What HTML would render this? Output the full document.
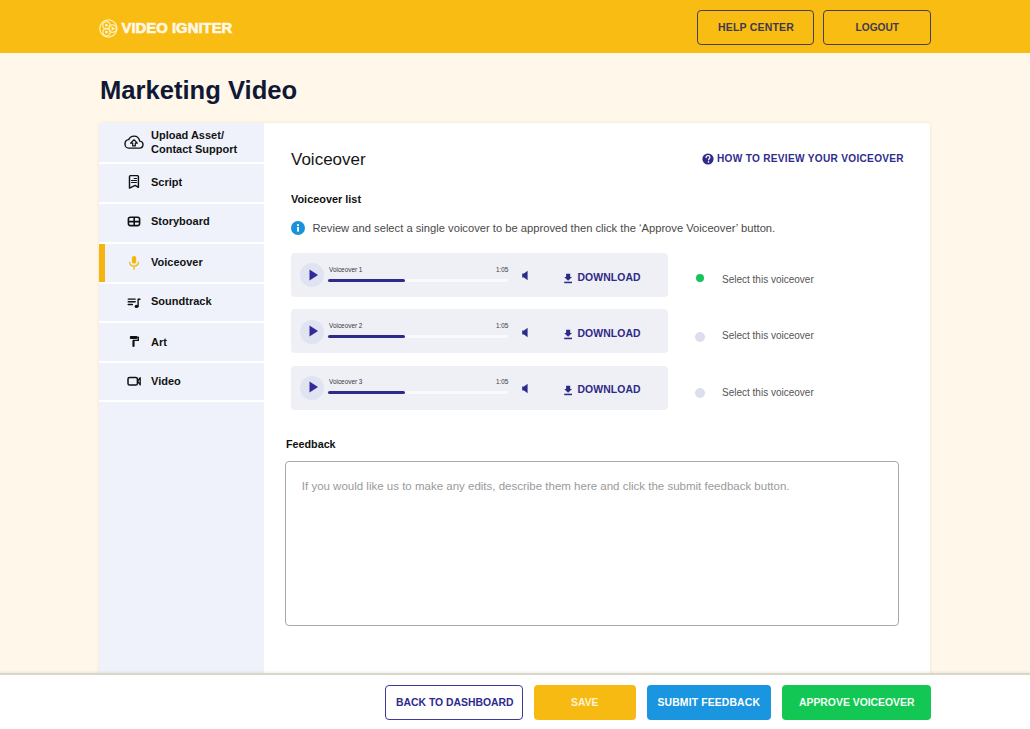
<!DOCTYPE html>
<html><head><meta charset="utf-8">
<style>
*{box-sizing:border-box;margin:0;padding:0}
html,body{width:1030px;height:729px;overflow:hidden}
body{font-family:"Liberation Sans",sans-serif;background:#FEF7EA;position:relative;color:#0F1535}
.a{position:absolute;white-space:nowrap;line-height:1}
#hdr{left:0;top:0;width:1030px;height:53px;background:#F8BC13}
.hbtn{position:absolute;top:10px;height:34.5px;border:1.6px solid #45404A;border-radius:4px}
.htx{position:absolute;font-weight:bold;font-size:10.5px;color:#3F3A4C;letter-spacing:0.2px;line-height:1;white-space:nowrap}
#title{left:100px;top:77.5px;font-size:25.6px;font-weight:bold;color:#111833}
#card{left:99px;top:123px;width:831px;height:552px;background:#fff;border-radius:3px 3px 0 0;box-shadow:0 0 3px rgba(180,170,140,0.25)}
#side{left:99px;top:123px;width:165px;height:552px;background:#EFF2FA;border-radius:3px 0 0 0}
.sep{position:absolute;left:99px;width:165px;height:2px;background:#fff}
.stx{position:absolute;left:151px;font-weight:bold;font-size:11px;color:#121212;line-height:1;white-space:nowrap}
.sic{position:absolute}
.row{position:absolute;left:291px;width:377px;height:44px;background:#EFEFF6;border-radius:4px}
.play{position:absolute;left:300px;width:24px;height:24px;border-radius:50%;background:#E0E3F2}
.vl{position:absolute;left:329px;font-size:6.4px;color:#38383F;line-height:1}
.vt{position:absolute;left:496px;font-size:6.3px;color:#38383F;line-height:1}
.trk{position:absolute;left:328px;width:180px;height:3px;background:#FAFAFD;border-radius:2px}
.prg{position:absolute;left:0;top:0;width:77px;height:3px;background:#2E2A8C;border-radius:2px}
.dl{position:absolute;left:577.5px;font-size:10.4px;font-weight:bold;color:#2D2A85;line-height:1;letter-spacing:0.1px}
.rad{position:absolute;left:695px;width:10px;height:10px;border-radius:50%;background:#DCDEEE}
.sel{position:absolute;left:722px;font-size:10px;color:#555558;line-height:1}
#foot{left:0;top:673px;width:1030px;height:56px;background:#fff;border-top:2px solid #D8D7CA;box-shadow:0 -1px 2px rgba(120,120,90,0.12)}
.fbtn{position:absolute;top:685px;height:34.5px;border-radius:4px}
.ftx{position:absolute;top:697.5px;font-weight:bold;font-size:10.4px;line-height:1;color:#fff;white-space:nowrap}
</style></head><body>
<div id="hdr" class="a"></div>
<svg class="a" style="left:98px;top:18px" width="22" height="22" viewBox="0 0 22 22">
 <g fill="none" stroke="#FFF1B8" stroke-width="1.25">
  <circle cx="10.4" cy="10.4" r="8.6"/>
  <circle cx="8.4" cy="7.2" r="3.7"/>
  <circle cx="14.6" cy="10.6" r="3.7"/>
  <circle cx="8.6" cy="14.1" r="3.7"/>
 </g>
 <g fill="#FFF8E0">
  <path d="M7.4 5.6 L10.5 7.25 L7.4 8.9 Z"/>
  <path d="M13.6 8.4 L17.1 10.55 L13.6 12.7 Z"/>
  <path d="M7.5 12.3 L10.7 14.05 L7.5 15.8 Z"/>
 </g>
</svg>
<div class="a" style="left:121.5px;top:21.2px;font-size:14.9px;font-weight:bold;color:#FFF8E6;-webkit-text-stroke:0.6px #FFF8E6">VIDEO IGNITER</div>
<div class="hbtn" style="left:697px;width:117px"></div>
<div class="htx" style="left:718px;top:22.3px">HELP CENTER</div>
<div class="hbtn" style="left:823px;width:108px"></div>
<div class="htx" style="left:855.5px;top:22.9px;letter-spacing:0;font-size:10.2px">LOGOUT</div>
<div id="title" class="a">Marketing Video</div>
<div id="card" class="a"></div>
<div id="side" class="a"></div>
<div class="sep" style="top:162px"></div>
<div class="sep" style="top:202px"></div>
<div class="sep" style="top:242px"></div>
<div class="sep" style="top:282px"></div>
<div class="sep" style="top:321px"></div>
<div class="sep" style="top:361px"></div>
<div class="sep" style="top:400px"></div>
<div class="a" style="left:99px;top:243.5px;width:6px;height:38px;background:#F5B50E"></div>
<svg class="a" style="left:120px;top:130px" width="28" height="24" viewBox="0 0 28 24" fill="none" stroke="#111" stroke-width="1.4" stroke-linejoin="round">
 <path d="M8.6 18.1 H19.4 C21.6 18.1 23 16.5 23 14.6 C23 12.7 21.6 11.3 19.7 11.1 C19.1 7.9 16.8 6.1 14 6.1 C11.4 6.1 9.6 7.6 8.7 9.6 C6.4 9.8 5 11.7 5 13.9 C5 16.2 6.6 18.1 8.6 18.1 Z"/>
 <path d="M14 9.8 L10.6 13.1 H12.7 V15.9 H15.3 V13.1 H17.4 Z" stroke-width="1.2"/>
</svg>
<svg class="a" style="left:122px;top:170px" width="24" height="24" viewBox="0 0 24 24" fill="none" stroke="#111" stroke-width="1.45" stroke-linejoin="round" stroke-linecap="round">
 <path d="M7.5 18.1 V6.5 Q7.5 5.6 8.4 5.6 H15.5 Q16.4 5.6 16.4 6.5 V17.3 L13.2 15.4 Z"/>
 <path d="M12.2 8.5 H14.5 M9.5 10.5 H14.5 M9.5 12.5 H14.5" stroke-width="1.1"/>
</svg>
<svg class="a" style="left:122px;top:209px" width="24" height="24" viewBox="0 0 24 24" fill="none" stroke="#111" stroke-width="1.6">
 <rect x="6.4" y="8.2" width="11.2" height="8.4" rx="2"/>
 <path d="M12.2 8.2 V16.6 M6.4 12.6 H17.6"/>
</svg>
<svg class="a" style="left:122px;top:250px" width="24" height="24" viewBox="0 0 24 24">
 <rect x="9.9" y="5.9" width="4.3" height="7.8" rx="2.15" fill="#F2B705"/>
 <path d="M7.6 12.4 Q8.3 16.2 12 16.2 Q15.7 16.2 16.5 12.4 M12 16.2 V19" fill="none" stroke="#F2B705" stroke-width="1.3" stroke-linecap="round"/>
</svg>
<svg class="a" style="left:122px;top:291px" width="24" height="24" viewBox="0 0 24 24">
 <path d="M6.2 8.1 H13.2 M6.2 10.7 H13.2 M6.2 13.5 H10.4" fill="none" stroke="#111" stroke-width="1.4" stroke-linecap="round"/>
 <path d="M16.1 15.3 V8.2 H18" fill="none" stroke="#111" stroke-width="1.4" stroke-linecap="round" stroke-linejoin="round"/>
 <ellipse cx="14.5" cy="15.4" rx="1.9" ry="1.7" fill="#111"/>
</svg>
<svg class="a" style="left:122px;top:329px" width="24" height="24" viewBox="0 0 24 24">
 <rect x="7.9" y="6.9" width="7.4" height="3.1" rx="0.8" fill="#111"/>
 <path d="M15.2 8.3 H16.3 V11.4 H11.5" fill="none" stroke="#111" stroke-width="1.4" stroke-linejoin="round"/>
 <path d="M11.5 11.8 V17" fill="none" stroke="#111" stroke-width="2.2" stroke-linecap="round"/>
</svg>
<svg class="a" style="left:122px;top:369px" width="24" height="24" viewBox="0 0 24 24" fill="none" stroke="#111" stroke-width="1.5" stroke-linejoin="round">
 <rect x="6" y="8.4" width="9.4" height="7.7" rx="1.6"/>
 <path d="M15.6 12.2 L18.2 8.7 V15.9 Z" stroke-width="1.3"/>
</svg>
<div class="stx" style="top:130.2px">Upload Asset/</div>
<div class="stx" style="top:143.6px">Contact Support</div>
<div class="stx" style="top:176.9px">Script</div>
<div class="stx" style="top:216.3px">Storyboard</div>
<div class="stx" style="top:256.9px">Voiceover</div>
<div class="stx" style="top:296.2px">Soundtrack</div>
<div class="stx" style="top:336.9px">Art</div>
<div class="stx" style="top:375.9px">Video</div>

<!-- main -->
<div class="a" style="left:291px;top:151.2px;font-size:17px;color:#161616">Voiceover</div>
<svg class="a" style="left:702px;top:153px" width="12" height="12" viewBox="0 0 12 12"><circle cx="6" cy="6" r="5.6" fill="#2E2A8C"/><path d="M4.1 4.6 C4.1 3.4 5 2.7 6 2.7 C7.1 2.7 7.9 3.4 7.9 4.4 C7.9 5.5 6.6 5.7 6.6 6.8" fill="none" stroke="#fff" stroke-width="1.3" stroke-linecap="round"/><circle cx="6.5" cy="8.9" r="0.8" fill="#fff"/></svg>
<div class="a" style="left:717px;top:154.2px;font-size:10.1px;font-weight:bold;color:#302C8E;letter-spacing:0.3px">HOW TO REVIEW YOUR VOICEOVER</div>
<div class="a" style="left:291px;top:194px;font-size:10.9px;font-weight:bold;color:#111">Voiceover list</div>
<svg class="a" style="left:290.8px;top:220.8px" width="14" height="14" viewBox="0 0 14 14"><circle cx="7" cy="7" r="7" fill="#1A92D9"/><rect x="6.1" y="6" width="1.9" height="4.6" fill="#fff"/><circle cx="7" cy="4.2" r="1.1" fill="#fff"/></svg>
<div class="a" style="left:312.5px;top:222.7px;font-size:11.2px;color:#4A4A4A">Review and select a single voicover to be approved then click the ‘Approve Voiceover’ button.</div>

<!-- rows -->
<div class="row" style="top:253px"></div>
<div class="row" style="top:309px"></div>
<div class="row" style="top:365.5px"></div>

<div class="play" style="top:263px"></div>
<div class="play" style="top:319.5px"></div>
<div class="play" style="top:375.5px"></div>
<svg class="a" style="left:309px;top:268.9px" width="10" height="12"><path d="M0.5 0.5 L9 6 L0.5 11.5 Z" fill="#33299A"/></svg>
<svg class="a" style="left:309px;top:325.4px" width="10" height="12"><path d="M0.5 0.5 L9 6 L0.5 11.5 Z" fill="#33299A"/></svg>
<svg class="a" style="left:309px;top:381.4px" width="10" height="12"><path d="M0.5 0.5 L9 6 L0.5 11.5 Z" fill="#33299A"/></svg>

<div class="vl" style="top:266.8px">Voiceover 1</div>
<div class="vl" style="top:323.2px">Voiceover 2</div>
<div class="vl" style="top:379.4px">Voiceover 3</div>
<div class="vt" style="top:266.8px">1:05</div>
<div class="vt" style="top:323.2px">1:05</div>
<div class="vt" style="top:379.4px">1:05</div>
<div class="trk" style="top:278.8px"><div class="prg"></div></div>
<div class="trk" style="top:335.2px"><div class="prg"></div></div>
<div class="trk" style="top:391.4px"><div class="prg"></div></div>

<svg class="a" style="left:521px;top:270px" width="8" height="11"><path d="M1.2 3.6 H3 L6.6 0.8 V10.2 L3 7.4 H1.2 Z" fill="#2E2A8C"/></svg>
<svg class="a" style="left:521px;top:326.5px" width="8" height="11"><path d="M1.2 3.6 H3 L6.6 0.8 V10.2 L3 7.4 H1.2 Z" fill="#2E2A8C"/></svg>
<svg class="a" style="left:521px;top:382.5px" width="8" height="11"><path d="M1.2 3.6 H3 L6.6 0.8 V10.2 L3 7.4 H1.2 Z" fill="#2E2A8C"/></svg>

<svg class="a" style="left:563px;top:272.5px" width="10" height="11"><path d="M3.1 0.8 H7.2 V3.9 H9 L5.1 7.8 L1.2 3.9 H3.1 Z" fill="#2D2A85"/><rect x="1.2" y="8.7" width="7.8" height="1.5" fill="#2D2A85"/></svg>
<svg class="a" style="left:563px;top:329px" width="10" height="11"><path d="M3.1 0.8 H7.2 V3.9 H9 L5.1 7.8 L1.2 3.9 H3.1 Z" fill="#2D2A85"/><rect x="1.2" y="8.7" width="7.8" height="1.5" fill="#2D2A85"/></svg>
<svg class="a" style="left:563px;top:385px" width="10" height="11"><path d="M3.1 0.8 H7.2 V3.9 H9 L5.1 7.8 L1.2 3.9 H3.1 Z" fill="#2D2A85"/><rect x="1.2" y="8.7" width="7.8" height="1.5" fill="#2D2A85"/></svg>
<div class="dl" style="top:272.6px">DOWNLOAD</div>
<div class="dl" style="top:329px">DOWNLOAD</div>
<div class="dl" style="top:385.2px">DOWNLOAD</div>

<div class="rad" style="top:273.8px;background:#17C45A;width:8.5px;height:8.5px;left:695.6px"></div>
<div class="rad" style="top:331.5px"></div>
<div class="rad" style="top:387.5px"></div>
<div class="sel" style="top:274.8px">Select this voiceover</div>
<div class="sel" style="top:331.2px">Select this voiceover</div>
<div class="sel" style="top:387.5px">Select this voiceover</div>

<div class="a" style="left:286px;top:438.8px;font-size:10.75px;font-weight:bold;color:#111">Feedback</div>
<div class="a" style="left:285px;top:461px;width:614px;height:165px;border:1.5px solid #A9A9A9;border-radius:4px;background:#fff"></div>
<div class="a" style="left:301.8px;top:481px;font-size:11.5px;color:#9A9A9A">If you would like us to make any edits, describe them here and click the submit feedback button.</div>

<div id="foot" class="a"></div>
<div class="fbtn" style="left:385px;width:138px;border:1.7px solid #3E3A98;background:#fff"></div>
<div class="ftx" style="left:396px;color:#2E2A8C">BACK TO DASHBOARD</div>
<div class="fbtn" style="left:534px;width:102px;background:#F7BA12"></div>
<div class="ftx" style="left:571px;color:#FFF2CF">SAVE</div>
<div class="fbtn" style="left:647px;width:124px;background:#1A95DF"></div>
<div class="ftx" style="left:657.5px;letter-spacing:0.14px">SUBMIT FEEDBACK</div>
<div class="fbtn" style="left:782px;width:148.5px;background:#12C753"></div>
<div class="ftx" style="left:799px;color:#F2FFF5">APPROVE VOICEOVER</div>
</body></html>
